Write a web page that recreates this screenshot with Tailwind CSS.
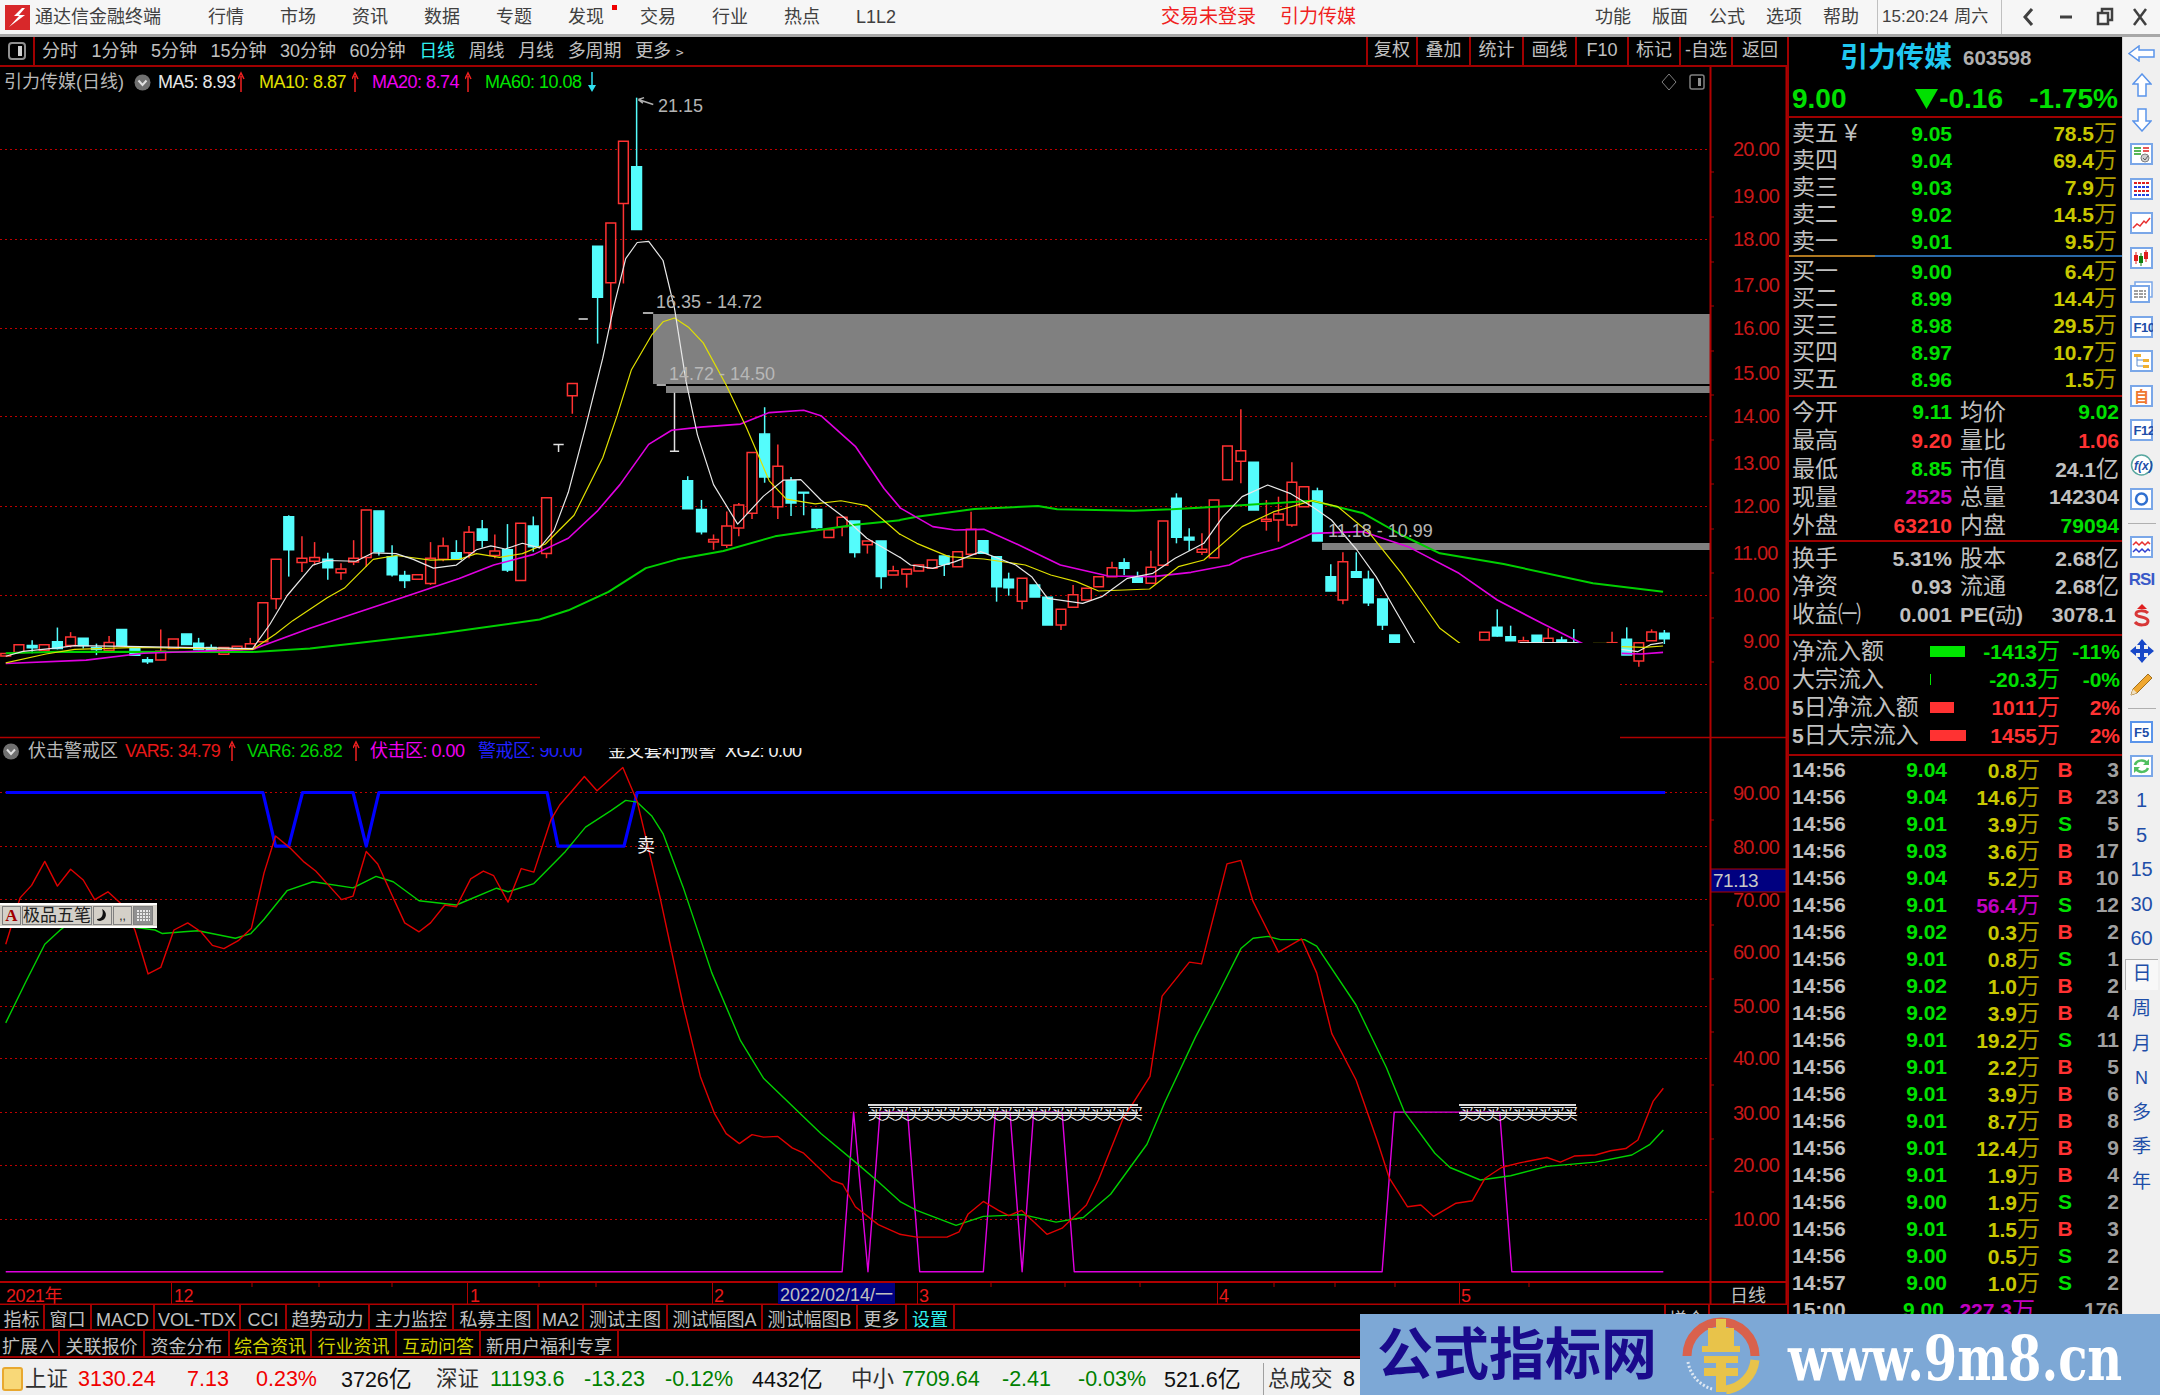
<!DOCTYPE html>
<html lang="zh-CN">
<head>
  <meta charset="UTF-8" />
  <title>通达信金融终端</title>
  <script src="https://cdn.jsdelivr.net/npm/@tailwindcss/browser@4"></script>
</head>
<body class="bg-black overflow-hidden">
<div class="relative flex h-[1395px] w-[2160px] flex-col overflow-hidden font-['Liberation_Sans','Noto_Sans_CJK_SC',sans-serif]">

  <!-- Menu bar -->
  <header class="flex h-[37px] shrink-0 items-center border-b-[3px] border-[#a8a8a8] bg-[#f6f6f6] text-[18px] text-[#404040]">
    <svg class="ml-[5px] h-[25px] w-[25px]" viewBox="0 0 25 25"><rect width="25" height="25" fill="#d8282a"/><path d="M17 3 L9 11 L14 11 L4 22 L20 10 L14 10 L20 3 Z" fill="#fff"/></svg>
    <span class="ml-[5px] w-[126px] whitespace-nowrap">通达信金融终端</span>
    <nav class="ml-[47px] flex gap-[36px]">
      <span class="w-[36px] whitespace-nowrap">行情</span>
      <span class="w-[36px] whitespace-nowrap">市场</span>
      <span class="w-[36px] whitespace-nowrap">资讯</span>
      <span class="w-[36px] whitespace-nowrap">数据</span>
      <span class="w-[36px] whitespace-nowrap">专题</span>
      <span class="relative w-[36px] whitespace-nowrap">发现<i class="absolute left-[44px] top-[1px] h-[5px] w-[5px] bg-[#f00000]"></i></span>
      <span class="w-[36px] whitespace-nowrap">交易</span>
      <span class="w-[36px] whitespace-nowrap">行业</span>
      <span class="w-[36px] whitespace-nowrap">热点</span>
      <span class="w-[36px] whitespace-nowrap">L1L2</span>
    </nav>
    <span class="ml-[269px] w-[97px] whitespace-nowrap text-[19px] text-[#f02020]">交易未登录</span>
    <span class="ml-[22px] w-[76px] whitespace-nowrap text-[19px] text-[#f02020]">引力传媒</span>
    <div class="ml-[239px] flex gap-[21px]">
      <span class="w-[36px] whitespace-nowrap">功能</span>
      <span class="w-[36px] whitespace-nowrap">版面</span>
      <span class="w-[36px] whitespace-nowrap">公式</span>
      <span class="w-[36px] whitespace-nowrap">选项</span>
      <span class="w-[36px] whitespace-nowrap">帮助</span>
    </div>
    <div class="ml-[18px] flex h-full w-[125px] items-center gap-[6px] border-x border-[#c0c0c0] pl-[4px] text-[17px] whitespace-nowrap">
      <span>15:20:24</span><span>周六</span>
    </div>
    <svg class="h-[34px] w-[157px] shrink-0" viewBox="2003 0 157 34" fill="none" stroke="#404040">
      <path d="M2033 9 L2026 17 L2033 25" stroke-width="3"/>
      <path d="M2061 17 H2073" stroke-width="3"/>
      <path d="M2099 13 h10 v11 h-10 z M2103 13 v-4 h10 v11 h-4" stroke-width="2.5"/>
      <path d="M2135 9 L2147 25 M2147 9 L2135 25" stroke-width="2.5"/>
    </svg>
  </header>

  <div class="flex min-h-0 flex-1">
    <!-- Chart side -->
    <section class="flex w-[1787px] shrink-0 flex-col">
      <!-- Period tool row -->
      <div class="flex h-[30px] shrink-0 items-center border-b-2 border-[#a00000] text-[18px] text-[#c0c0c0]">
        <div class="flex h-full w-[35px] items-center justify-center border-r-2 border-[#a00000]">
          <svg class="h-[18px] w-[18px]" viewBox="0 0 18 18"><rect x="1" y="1" width="16" height="16" rx="3" fill="none" stroke="#909090" stroke-width="2"/><rect x="10" y="4" width="4" height="10" fill="#d0d0d0"/></svg>
        </div>
        <div class="ml-[7px] flex gap-[13.5px] whitespace-nowrap">
          <span>分时</span><span>1分钟</span><span>5分钟</span><span>15分钟</span><span>30分钟</span><span>60分钟</span>
          <span class="text-[#30f0f0]">日线</span><span>周线</span><span>月线</span><span>多周期</span><span>更多﹥</span>
        </div>
        <div class="ml-auto flex h-full whitespace-nowrap text-center">
          <span class="w-[50px] border-l-2 border-[#a00000]">复权</span>
          <span class="w-[53px] border-l-2 border-[#a00000]">叠加</span>
          <span class="w-[53px] border-l-2 border-[#a00000]">统计</span>
          <span class="w-[53px] border-l-2 border-[#a00000]">画线</span>
          <span class="w-[52px] border-l-2 border-[#a00000]">F10</span>
          <span class="w-[52px] border-l-2 border-[#a00000]">标记</span>
          <span class="w-[52px] border-l-2 border-[#a00000]">-自选</span>
          <span class="w-[56px] border-l-2 border-[#a00000]">返回</span>
        </div>
      </div>

      <!-- Chart canvas, svg coordinates are page pixels -->
      <div class="relative h-[1238px] w-[1787px] shrink-0">
        <svg class="absolute inset-0 [&_*]:[vector-effect:non-scaling-stroke]" width="1787" height="1238" viewBox="0 67 1787 1238" fill="none">
          <!-- main grid -->
          <path d="M0 149.5H1710 M0 239.5H1710 M0 328.5H1710 M0 416.5H1710 M0 506.5H1710 M0 595.5H1710 M0 684.5H1710" stroke="#c00000" stroke-dasharray="2 3"/>
          <!-- gap zones -->
          <rect x="653" y="314" width="1057" height="70" fill="#808080"/>
          <rect x="666" y="386" width="1044" height="7" fill="#808080"/>
          <rect x="1322" y="543" width="388" height="7" fill="#808080"/>
          <g id="candles7" transform="translate(0 90) scale(.57405 .38314)"></g>
          <g id="candles8" transform="translate(700 290) scale(.6378 .33333)"></g>
          <!-- price marks -->
          <g transform="translate(0 90) scale(.57405 .38314)" stroke="#e0e0e0" stroke-width="1.5">
            <path d="M964 925H982 M973 925V945 M1008 598H1024 M1120 582H1138 M1144 770H1160 M1175 790V943 M1167 943H1183"/>
            <path d="M1112 25L1138 38 M1112 25L1122 20 M1112 25L1120 34" stroke="#b0b0b0"/>
          </g>
          <!-- MA lines, left half -->
          <g transform="translate(0 90) scale(.57405 .38314)" stroke-width="1.2" stroke-linejoin="round">
            <polyline stroke="#00d000" stroke-width="2" points="10,1470 100,1466 440,1467 540,1458 760,1420 940,1382 990,1358 1060,1310 1125,1248 1180,1225 1260,1203 1350,1165 1490,1135 1568,1123"/>
            <polyline stroke="#e000e0" stroke-width="1.6" points="10,1497 150,1488 250,1470 440,1460 540,1405 620,1365 700,1325 800,1275 860,1240 930,1212 990,1170 1040,1100 1080,1030 1130,925 1170,888 1220,880 1290,872 1340,842 1400,836 1430,850 1490,930 1540,1040 1568,1090"/>
            <polyline stroke="#e0e000" points="10,1495 80,1472 130,1460 240,1455 440,1460 480,1420 510,1385 570,1325 600,1300 650,1225 690,1215 750,1227 800,1225 830,1210 870,1220 910,1210 950,1185 1000,1110 1050,960 1075,850 1100,730 1135,640 1155,605 1175,595 1200,620 1225,660 1265,770 1300,880 1340,1020 1370,1068 1420,1080 1465,1072 1510,1085 1568,1160"/>
            <polyline stroke="#e8e8e8" points="10,1478 40,1465 100,1456 130,1450 220,1452 440,1458 470,1395 500,1320 545,1240 570,1228 620,1230 650,1208 690,1210 720,1225 755,1248 795,1240 830,1200 855,1190 880,1198 910,1183 940,1195 965,1150 990,1050 1020,880 1050,700 1070,560 1090,440 1110,398 1130,395 1155,445 1175,570 1195,760 1215,900 1243,1030 1285,1133 1330,1060 1365,1018 1395,1017 1430,1070 1470,1115 1510,1170 1568,1220"/>
          </g>
          <!-- MA lines, right half -->
          <g transform="translate(700 290) scale(.6378 .33333)" stroke-width="1.2" stroke-linejoin="round">
            <polyline stroke="#00d000" stroke-width="2" points="313,690 340,680 430,657 530,648 560,658 680,662 740,658 830,648 960,632 1040,670 1100,735 1160,790 1260,822 1400,880 1510,905"/>
            <polyline stroke="#e000e0" stroke-width="1.6" points="313,653 365,710 400,720 445,718 500,765 565,825 640,858 710,860 770,847 830,825 850,805 910,773 960,730 1040,725 1110,770 1190,850 1250,930 1320,1000 1385,1062"/>
            <polyline stroke="#e0e000" points="313,732 340,760 390,800 445,807 510,825 550,855 590,875 625,903 705,897 750,830 790,810 850,710 900,665 960,632 1000,650 1050,730 1100,850 1140,960 1160,1015 1195,1065"/>
            <polyline stroke="#e8e8e8" points="313,801 330,825 365,835 400,815 440,785 495,825 520,860 545,925 600,940 630,920 670,865 710,850 745,805 790,760 820,680 850,620 890,585 925,610 960,650 990,690 1030,780 1060,860 1090,960 1122,1065"/>
            <path d="M1285 1058H1375" stroke="#e8e8e8"/>
            <path d="M1400 1060H1428" stroke="#808000"/>
            <polyline stroke="#e000e0" stroke-width="1.6" points="1445,1090 1475,1092 1510,1087"/>
            <polyline stroke="#e8e8e8" points="1445,1078 1470,1085 1490,1064 1510,1058"/>
            <polyline stroke="#e0e000" points="1445,1070 1480,1072 1510,1068"/>
          </g>
          <!-- black patch left by a closed window -->
          <rect x="540" y="643" width="1080" height="105" fill="#000"/>
          <!-- price labels on the chart -->
          <g font-size="18" fill="#b4b4b4">
            <text x="658" y="112">21.15</text>
            <text x="656" y="308">16.35 - 14.72</text>
            <text x="669" y="380" fill="#b8b8b8">14.72 - 14.50</text>
            <text x="1328" y="537">11.18 - 10.99</text>
          </g>

          <!-- lower indicator -->
          <path d="M0 737.5H540 M1620 737.5H1787" stroke="#b00000" stroke-width="1.5"/>
          <path d="M0 792.5H1710 M0 846.5H1710 M0 899.5H1710 M0 951.5H1710 M0 1006.5H1710 M0 1058.5H1710 M0 1112.5H1710 M0 1165.5H1710 M0 1219.5H1710" stroke="#c00000" stroke-dasharray="2 3"/>
          <g transform="translate(0 730) scale(.57405 .35714)" stroke-linejoin="round">
            <polyline stroke="#0000ff" stroke-width="3.2" points="10,175 458,175 480,325 503,325 527,175 615,175 638,325 660,175 953,175 972,325 1087,325 1110,175 1568,175"/>
            <polyline stroke="#e000e0" stroke-width="1.4" points="10,1517 1467,1517 1487,1070 1512,1517 1533,1070"/>
            <polyline stroke="#00d000" stroke-width="1.4" points="10,820 45,705 78,600 105,560 130,530 270,560 283,570 320,565 345,562 410,583 437,570 460,530 500,450 545,425 615,442 655,410 685,425 730,478 795,490 865,443 885,453 930,430 985,340 1020,272 1065,225 1090,197 1110,202 1135,240 1155,290 1190,440 1240,680 1290,870 1330,975 1430,1130 1490,1210 1530,1265 1568,1320"/>
            <polyline stroke="#e00000" stroke-width="1.4" points="10,600 35,470 55,435 78,368 100,437 123,390 145,420 165,475 188,453 210,485 235,560 258,683 280,665 303,560 327,540 350,565 370,603 390,612 415,590 438,555 460,400 480,297 505,330 530,370 550,395 595,475 615,465 638,340 658,375 705,540 730,565 750,540 775,490 795,495 820,417 842,395 860,408 885,482 908,388 930,398 960,250 975,210 1018,130 1040,170 1085,105 1110,200 1150,470 1190,770 1220,970 1245,1075 1265,1130 1288,1158 1310,1133 1330,1140 1355,1138 1380,1170 1400,1185 1450,1262 1468,1272 1490,1335 1530,1385 1568,1412"/>
          </g>
          <g transform="translate(850 730) scale(.60606 .35714)" stroke-linejoin="round">
            <path d="M82 175H1345" stroke="#0000ff" stroke-width="3.2"/>
            <polyline stroke="#e000e0" stroke-width="1.4" points="48,1070 95,1070 115,1517 220,1517 240,1070 264,1070 284,1517 303,1070 350,1070 370,1517 878,1517 898,1070 1072,1070 1092,1517 1342,1517"/>
            <polyline stroke="#00d000" stroke-width="1.4" points="82,1320 110,1345 175,1387 220,1362 285,1357 340,1378 385,1365 430,1300 490,1160 520,1040 570,860 610,730 645,612 665,583 690,578 710,587 750,587 770,605 835,770 885,945 915,1070 965,1185 990,1225 1040,1260 1090,1248 1150,1222 1230,1210 1290,1190 1320,1160 1342,1120"/>
            <polyline stroke="#e00000" stroke-width="1.4" points="82,1412 110,1420 160,1420 180,1405 195,1355 220,1320 245,1345 262,1360 283,1345 325,1412 350,1395 390,1330 410,1260 450,1090 495,970 515,745 560,650 580,655 622,375 645,365 665,480 707,622 745,585 770,680 795,850 835,980 870,1150 890,1255 920,1335 942,1330 963,1362 1000,1325 1027,1318 1048,1255 1075,1225 1105,1212 1150,1197 1172,1210 1195,1193 1230,1190 1255,1178 1280,1172 1300,1148 1325,1040 1342,1003"/>
          </g>
          <!-- buy signal rows -->
          <path d="M868 1105H1138 M868 1113H1138 M1459 1105H1576 M1459 1113H1576" stroke="#d8d8d8" stroke-width="2"/>
          <g id="buyMarks" fill="#e8e8e8" font-size="15"></g>
          <text x="637" y="852" fill="#f0f0f0" font-size="18">卖</text>

          <!-- axis -->
          <path d="M1710.5 67V1305 M1786.5 67V1305" stroke="#b00000" stroke-width="2"/>
          <path d="M1710 172h4 M1710 217h4 M1710 262h4 M1710 306h4 M1710 351h4 M1710 395h4 M1710 440h4 M1710 484h4 M1710 529h4 M1710 573h4 M1710 618h4 M1710 662h4 M1710 820h4 M1710 873h4 M1710 925h4 M1710 979h4 M1710 1032h4 M1710 1085h4 M1710 1139h4 M1710 1192h4" stroke="#b00000"/>
          <g fill="#c81818" font-size="20" letter-spacing="-.8">
            <text x="1733" y="156">20.00</text><text x="1733" y="203">19.00</text><text x="1733" y="246">18.00</text><text x="1733" y="292">17.00</text>
            <text x="1733" y="335">16.00</text><text x="1733" y="380">15.00</text><text x="1733" y="423">14.00</text><text x="1733" y="470">13.00</text>
            <text x="1733" y="513">12.00</text><text x="1733" y="560">11.00</text><text x="1733" y="602">10.00</text><text x="1743" y="648">9.00</text><text x="1743" y="690">8.00</text>
            <text x="1733" y="800">90.00</text><text x="1733" y="854">80.00</text><text x="1733" y="907">70.00</text><text x="1733" y="959">60.00</text>
            <text x="1733" y="1013">50.00</text><text x="1733" y="1065">40.00</text><text x="1733" y="1120">30.00</text><text x="1733" y="1172">20.00</text><text x="1733" y="1226">10.00</text>
          </g>
          <rect x="1711" y="869" width="75" height="23" fill="#000080" stroke="#b00000"/>
          <text x="1713" y="887" fill="#c8c8c8" font-size="19" letter-spacing="-.5">71.13</text>

          <!-- date axis -->
          <path d="M0 1282H1787 M0 1304.5H1787" stroke="#b00000" stroke-width="2"/>
          <path d="M171.5 1282V1305 M467.5 1282V1305 M712.5 1282V1305 M917.5 1282V1305 M1217.5 1282V1305 M1459.5 1282V1305 M1710.5 1282V1305" stroke="#b00000"/>
          <path d="M252 1282v5 M319 1282v5 M392 1282v5 M539 1282v5 M596 1282v5 M991 1282v5 M1065 1282v5 M1140 1282v5 M1274 1282v5 M1335 1282v5 M1395 1282v5 M1529 1282v5" stroke="#b00000"/>
          <g fill="#e81818" font-size="18" letter-spacing="-.4">
            <text x="6" y="1302">2021年</text><text x="174" y="1302">12</text><text x="470" y="1302">1</text><text x="714" y="1302">2</text>
            <text x="919" y="1302">3</text><text x="1219" y="1302">4</text><text x="1461" y="1302">5</text>
          </g>
          <rect x="778" y="1283" width="117" height="21" fill="#000080"/>
          <text x="780" y="1301" fill="#c0c0c0" font-size="18">2022/02/14/一</text>
          <text x="1730" y="1302" fill="#c0c0c0" font-size="18">日线</text>
        </svg>

        <!-- main chart caption -->
        <div class="absolute left-[4px] top-[4px] flex h-[22px] items-center whitespace-nowrap text-[18px] tracking-[-0.5px]">
          <span class="w-[128px] text-[#b8b8b8] tracking-normal">引力传媒(日线)</span>
          <svg class="ml-[2px] h-[17px] w-[17px]" viewBox="0 0 17 17"><circle cx="8.5" cy="8.5" r="8" fill="#707070"/><path d="M4.5 6.5L8.5 11L12.5 6.5" stroke="#e0e0e0" stroke-width="2" fill="none"/></svg>
          <span class="ml-[7px] w-[80px] text-[#e8e8e8]">MA5: 8.93</span>
          <svg class="h-[22px] w-[21px]" viewBox="0 0 21 22"><path d="M3 21V5 M0 8L3 2L6 8" stroke="#f02020" stroke-width="1.5" fill="none"/></svg>
          <span class="w-[93px] text-[#e0e000]">MA10: 8.87</span>
          <svg class="h-[22px] w-[20px]" viewBox="0 0 20 22"><path d="M3 21V5 M0 8L3 2L6 8" stroke="#f02020" stroke-width="1.5" fill="none"/></svg>
          <span class="w-[93px] text-[#f000f0]">MA20: 8.74</span>
          <svg class="h-[22px] w-[20px]" viewBox="0 0 20 22"><path d="M3 21V5 M0 8L3 2L6 8" stroke="#f02020" stroke-width="1.5" fill="none"/></svg>
          <span class="w-[102px] text-[#00e600]">MA60: 10.08</span>
          <svg class="h-[22px] w-[12px]" viewBox="0 0 12 22"><path d="M5 1V16" stroke="#30e0f0" stroke-width="1.5"/><path d="M1 14H9L5 21Z" fill="#30e0f0"/></svg>
        </div>
        <svg class="absolute left-[1660px] top-[6px] h-[18px] w-[48px]" viewBox="0 0 48 18"><path d="M9 1L16 9L9 17L2 9Z" fill="none" stroke="#808080"/><rect x="30" y="2" width="14" height="14" rx="2" fill="none" stroke="#808080" stroke-width="1.5"/><rect x="38" y="5" width="3" height="8" fill="#909090"/></svg>

        <!-- lower chart caption -->
        <div class="absolute left-[2px] top-[673px] flex h-[22px] items-center whitespace-nowrap text-[18px] tracking-[-0.5px]">
          <svg class="h-[17px] w-[18px]" viewBox="0 0 17 17"><circle cx="8.5" cy="8.5" r="8" fill="#707070"/><path d="M4.5 6.5L8.5 11L12.5 6.5" stroke="#e0e0e0" stroke-width="2" fill="none"/></svg>
          <span class="ml-[8px] w-[97px] text-[#b8b8b8] tracking-normal">伏击警戒区</span>
          <span class="w-[104px] text-[#e81818]">VAR5: 34.79</span>
          <svg class="h-[22px] w-[18px]" viewBox="0 0 18 22"><path d="M3 21V5 M0 8L3 2L6 8" stroke="#f02020" stroke-width="1.5" fill="none"/></svg>
          <span class="w-[106px] text-[#00d000]">VAR6: 26.82</span>
          <svg class="h-[22px] w-[17px]" viewBox="0 0 17 22"><path d="M3 21V5 M0 8L3 2L6 8" stroke="#f02020" stroke-width="1.5" fill="none"/></svg>
          <span class="w-[108px] text-[#f000f0]">伏击区: 0.00</span>
          <span class="w-[130px] text-[#2020ff]">警戒区: 90.00</span>
          <span class="ml-[-66px] pl-[66px] w-[196px] text-[#f0f0f0] tracking-normal">金叉套利预警</span>
          <span class="ml-[-13px] text-[#f0f0f0]">XG2: 0.00</span>
        </div>
        <!-- the closed window also clips the top of the caption -->
        <div class="absolute left-[540px] top-[660px] h-[21px] w-[1080px] bg-black"></div>

        <!-- IME bar -->
        <div class="absolute left-0 top-[836px] flex h-[25px] w-[157px] items-stretch gap-px border-t-2 border-b-2 border-white bg-[#d4d0c8] px-[2px] py-[1px] text-[17px] text-[#202020]">
          <span class="flex w-[19px] items-center justify-center border border-[#808080] font-['Liberation_Serif',serif] font-bold text-[#a00000]">A</span>
          <span class="flex w-[70px] items-center justify-center whitespace-nowrap border border-[#808080]">极品五笔</span>
          <span class="flex w-[19px] items-center justify-center border border-[#808080]">
            <svg class="h-[13px] w-[11px]" viewBox="0 0 11 13"><path d="M5 0C11 3 10 11 3 12C1 12 0 11 0 10C5 10 7 5 5 0Z" fill="#101010"/></svg>
          </span>
          <span class="flex w-[19px] items-center justify-center border border-[#808080] text-[12px] leading-none">,,</span>
          <span class="flex w-[20px] items-center justify-center border border-[#808080] bg-[#909090]">
            <svg class="h-[13px] w-[15px]" viewBox="0 0 15 13"><path d="M1 2H14 M1 5H14 M1 8H14 M1 11H14" stroke="#e8e8e8" stroke-dasharray="2 1" stroke-width="2"/></svg>
          </span>
        </div>
      </div>

      <!-- Indicator tabs -->
      <div class="flex h-[26px] shrink-0 border-b-2 border-[#a00000] text-center text-[18px] leading-[30px] whitespace-nowrap text-[#c0c0c0] [&>span]:h-full">
        <span class="w-[45px] border-r-2 border-[#a00000]">指标</span>
        <span class="w-[47px] border-r-2 border-[#a00000]">窗口</span>
        <span class="w-[63px] border-r-2 border-[#a00000]">MACD</span>
        <span class="w-[86px] border-r-2 border-[#a00000]">VOL-TDX</span>
        <span class="w-[46px] border-r-2 border-[#a00000]">CCI</span>
        <span class="w-[83px] border-r-2 border-[#a00000]">趋势动力</span>
        <span class="w-[84px] border-r-2 border-[#a00000]">主力监控</span>
        <span class="w-[85px] border-r-2 border-[#a00000]">私募主图</span>
        <span class="w-[45px] border-r-2 border-[#a00000]">MA2</span>
        <span class="w-[84px] border-r-2 border-[#a00000]">测试主图</span>
        <span class="w-[95px] border-r-2 border-[#a00000]">测试幅图A</span>
        <span class="w-[95px] border-r-2 border-[#a00000]">测试幅图B</span>
        <span class="w-[49px] border-r-2 border-[#a00000]">更多</span>
        <span class="w-[48px] border-r-2 border-[#a00000] text-[#30f0f0]">设置</span>
        <span class="ml-[709px] w-[46px] border-x-2 border-[#a00000]">增仓</span>
      </div>
      <div class="flex h-[27px] shrink-0 border-b-2 border-[#a00000] text-center text-[18px] leading-[33px] whitespace-nowrap text-[#c0c0c0] [&>span]:h-full">
        <span class="w-[60px] border-r-2 border-[#a00000]">扩展∧</span>
        <span class="w-[85px] border-r-2 border-[#a00000]">关联报价</span>
        <span class="w-[85px] border-r-2 border-[#a00000]">资金分布</span>
        <span class="w-[82px] border-r-2 border-[#a00000] text-[#d0d000]">综合资讯</span>
        <span class="w-[85px] border-r-2 border-[#a00000] text-[#d0d000]">行业资讯</span>
        <span class="w-[84px] border-r-2 border-[#a00000] text-[#d0d000]">互动问答</span>
        <span class="w-[138px] border-r-2 border-[#a00000]">新用户福利专享</span>
      </div>
    </section>

    <!-- Quote panel -->
    <aside class="flex h-full w-[335px] shrink-0 flex-col overflow-hidden border-l-2 border-[#a00000] text-[#c0c0c0]">
      <div class="h-[81px] shrink-0 border-b-2 border-[#a00000]">
        <div class="flex h-[42px] items-center pl-[51px] whitespace-nowrap">
          <span class="w-[115px] text-[28px] font-bold text-[#20c8f0]">引力传媒</span>
          <span class="ml-[8px] text-[20.5px] font-bold text-[#b0b0b0]">603598</span>
        </div>
        <div class="mt-[3px] flex h-[34px] items-center text-[28px] font-bold whitespace-nowrap text-[#00e000]">
          <span class="ml-[3px] w-[123px]">9.00</span>
          <svg class="h-[20px] w-[23px]" viewBox="0 0 23 20"><path d="M0 0H23L11.5 20Z" fill="#00e000"/></svg>
          <span class="w-[65px] text-right">-0.16</span>
          <span class="w-[115px] text-right">-1.75%</span>
        </div>
      </div>

      <div id="bookSell" class="shrink-0 pt-[2px]"></div>
      <div class="flex h-[2px] shrink-0"><i class="w-[86px] bg-[#b07820]"></i><i class="flex-1 bg-[#2868a8]"></i></div>
      <div id="bookBuy" class="shrink-0 pt-px"></div>
      <div class="mt-[2px] h-[2px] shrink-0 bg-[#a00000]"></div>

      <div class="shrink-0 py-[1px] text-[23px]">
        <div class="flex h-[28.3px] items-center"><span class="w-[100px] pl-[3px]">今开</span><b class="w-[63px] text-right text-[21px] text-[#00e000]">9.11</b><span class="ml-[8px] w-[60px]">均价</span><b class="flex-1 pr-[3px] text-right text-[21px] text-[#00e000]">9.02</b></div>
        <div class="flex h-[28.3px] items-center"><span class="w-[100px] pl-[3px]">最高</span><b class="w-[63px] text-right text-[21px] text-[#ff3232]">9.20</b><span class="ml-[8px] w-[60px]">量比</span><b class="flex-1 pr-[3px] text-right text-[21px] text-[#ff3232]">1.06</b></div>
        <div class="flex h-[28.3px] items-center"><span class="w-[100px] pl-[3px]">最低</span><b class="w-[63px] text-right text-[21px] text-[#00e000]">8.85</b><span class="ml-[8px] w-[60px]">市值</span><b class="flex-1 pr-[3px] text-right text-[21px] text-[#c0c0c0]">24.1<span class="font-normal text-[23px]">亿</span></b></div>
        <div class="flex h-[28.3px] items-center"><span class="w-[100px] pl-[3px]">现量</span><b class="w-[63px] text-right text-[21px] text-[#c000c0]">2525</b><span class="ml-[8px] w-[60px]">总量</span><b class="flex-1 pr-[3px] text-right text-[21px] text-[#c0c0c0]">142304</b></div>
        <div class="flex h-[28.3px] items-center"><span class="w-[100px] pl-[3px]">外盘</span><b class="w-[63px] text-right text-[21px] text-[#ff3232]">63210</b><span class="ml-[8px] w-[60px]">内盘</span><b class="flex-1 pr-[3px] text-right text-[21px] text-[#00e000]">79094</b></div>
      </div>
      <div class="h-[2px] shrink-0 bg-[#a00000]"></div>

      <div class="h-[92px] shrink-0 pt-[2px] text-[23px]">
        <div class="flex h-[28px] items-center"><span class="w-[100px] pl-[3px]">换手</span><b class="w-[63px] text-right text-[21px]">5.31%</b><span class="ml-[8px] w-[60px]">股本</span><b class="flex-1 pr-[3px] text-right text-[21px]">2.68<span class="font-normal text-[23px]">亿</span></b></div>
        <div class="flex h-[28px] items-center"><span class="w-[100px] pl-[3px]">净资</span><b class="w-[63px] text-right text-[21px]">0.93</b><span class="ml-[8px] w-[60px]">流通</span><b class="flex-1 pr-[3px] text-right text-[21px]">2.68<span class="font-normal text-[23px]">亿</span></b></div>
        <div class="flex h-[28px] items-center whitespace-nowrap"><span class="w-[100px] pl-[3px]">收益㈠</span><b class="w-[63px] text-right text-[21px]">0.001</b><b class="ml-[8px] w-[68px] text-[21px] font-bold">PE(<span class="font-normal">动</span>)</b><b class="flex-1 pr-[6px] text-right text-[21px]">3078.1</b></div>
      </div>
      <div class="h-[2px] shrink-0 bg-[#a00000]"></div>

      <div class="h-[118px] shrink-0 pt-px text-[23px] whitespace-nowrap">
        <div class="flex h-[28px] items-center"><span class="w-[141px] pl-[3px]">净流入额</span><i class="h-[11px] w-[35px] bg-[#00e600]"></i><b class="ml-auto text-[21px] text-[#00e000]">-1413<span class="font-normal text-[23px]">万</span></b><b class="w-[62px] pr-[2px] text-right text-[21px] text-[#00e000]">-11%</b></div>
        <div class="flex h-[28px] items-center"><span class="w-[141px] pl-[3px]">大宗流入</span><i class="h-[11px] w-px bg-[#00e600]"></i><b class="ml-auto text-[21px] text-[#00e000]">-20.3<span class="font-normal text-[23px]">万</span></b><b class="w-[62px] pr-[2px] text-right text-[21px] text-[#00e000]">-0%</b></div>
        <div class="flex h-[28px] items-center"><span class="w-[141px] pl-[3px]"><b class="text-[21px]">5</b>日净流入额</span><i class="h-[11px] w-[24px] bg-[#ff3232]"></i><b class="ml-auto text-[21px] text-[#ff3232]">1011<span class="font-normal text-[23px]">万</span></b><b class="w-[62px] pr-[2px] text-right text-[21px] text-[#ff3232]">2%</b></div>
        <div class="flex h-[28px] items-center"><span class="w-[141px] pl-[3px]"><b class="text-[21px]">5</b>日大宗流入</span><i class="h-[11px] w-[36px] bg-[#ff3232]"></i><b class="ml-auto text-[21px] text-[#ff3232]">1455<span class="font-normal text-[23px]">万</span></b><b class="w-[62px] pr-[2px] text-right text-[21px] text-[#ff3232]">2%</b></div>
      </div>
      <div class="h-[2px] shrink-0 bg-[#a00000]"></div>

      <div id="ticks" class="shrink-0"></div>
    </aside>

    <!-- Right tool strip -->
    <aside class="flex w-[38px] shrink-0 flex-col items-center border-l border-[#d8d8d8] bg-[#f0f0f0] text-[#1e4ea8]">
      <svg class="mt-[8px] h-[17px] w-[27px]" viewBox="0 0 27 17"><path d="M1 8.5L11 1V5H26V12H11V16Z" fill="#fff" stroke="#5a94ea" stroke-width="1.5"/></svg>
      <svg class="mt-[11px] h-[24px] w-[20px]" viewBox="0 0 20 24"><path d="M10 1L19 11H14V23H6V11H1Z" fill="#fff" stroke="#5a94ea" stroke-width="1.5"/></svg>
      <svg class="mt-[11px] h-[24px] w-[20px]" viewBox="0 0 20 24"><path d="M10 23L19 13H14V1H6V13H1Z" fill="#fff" stroke="#5a94ea" stroke-width="1.5"/></svg>
      <div class="mt-[11px] flex flex-col gap-[12.5px]">
        <svg class="h-[22px] w-[23px]" viewBox="0 0 23 22"><rect x="1" y="1" width="21" height="20" fill="#fff" stroke="#7aa7e8" stroke-width="2"/><path d="M4 5H11 M4 8H11 M4 11H11" stroke="#20a020" stroke-width="1.5"/><path d="M13 5H19 M13 8H19" stroke="#e02020" stroke-width="1.5"/><circle cx="15" cy="15" r="4" fill="#d0d0d0" stroke="#808080"/><path d="M13 15L15 17L18 13" stroke="#606060" fill="none"/></svg>
        <svg class="h-[22px] w-[23px]" viewBox="0 0 23 22"><rect x="1" y="1" width="21" height="20" fill="#fff" stroke="#7aa7e8" stroke-width="2"/><path d="M4 5H19" stroke="#e02020" stroke-width="2" stroke-dasharray="3 1"/><path d="M4 9H19" stroke="#2040e0" stroke-width="2" stroke-dasharray="3 1"/><path d="M4 13H19" stroke="#e02020" stroke-width="2" stroke-dasharray="3 1"/><path d="M4 17H19" stroke="#2040e0" stroke-width="2" stroke-dasharray="3 1"/></svg>
        <svg class="h-[22px] w-[23px]" viewBox="0 0 23 22"><rect x="1" y="1" width="21" height="20" fill="#fff" stroke="#7aa7e8" stroke-width="2"/><path d="M3 16L7 12L10 14L14 9L16 11L20 6" stroke="#e83030" stroke-width="1.5" fill="none"/></svg>
        <svg class="h-[22px] w-[23px]" viewBox="0 0 23 22"><rect x="1" y="1" width="21" height="20" fill="#fff" stroke="#7aa7e8" stroke-width="2"/><path d="M6 5V17 M16 3V15" stroke="#e02020"/><path d="M11 6V19" stroke="#108010"/><rect x="4" y="8" width="4" height="6" fill="#e02020"/><rect x="9" y="9" width="4" height="7" fill="#108010"/><rect x="14" y="5" width="4" height="7" fill="#e02020"/></svg>
        <svg class="h-[22px] w-[23px]" viewBox="0 0 23 22"><rect x="5" y="1" width="17" height="15" fill="#fff" stroke="#7aa7e8" stroke-width="1.5"/><rect x="1" y="5" width="18" height="16" fill="#fff" stroke="#7aa7e8" stroke-width="2"/><path d="M4 10H16 M4 13H16 M4 16H16" stroke="#808080" stroke-width="1.5" stroke-dasharray="4 1"/></svg>
        <svg class="h-[22px] w-[23px]" viewBox="0 0 23 22"><rect x="1" y="1" width="21" height="20" fill="#fff" stroke="#7aa7e8" stroke-width="2"/><text x="3.5" y="16" fill="#1e4ea8" font-size="13" font-weight="bold" letter-spacing="-.5">F10</text></svg>
        <svg class="h-[22px] w-[23px]" viewBox="0 0 23 22"><rect x="1" y="1" width="21" height="20" fill="#fff" stroke="#7aa7e8" stroke-width="2"/><rect x="4" y="4" width="7" height="3" fill="#f0b030"/><rect x="13" y="9" width="6" height="3" fill="#f0b030"/><rect x="13" y="15" width="6" height="3" fill="#f0b030"/><path d="M7 7V16H13 M7 10H13" stroke="#6090d0" fill="none"/></svg>
        <svg class="h-[22px] w-[23px]" viewBox="0 0 23 22"><rect x="1" y="1" width="21" height="20" fill="#fff" stroke="#7aa7e8" stroke-width="2"/><text x="11.5" y="17" text-anchor="middle" fill="#f07830" font-size="15" font-weight="bold">自</text></svg>
        <svg class="h-[22px] w-[23px]" viewBox="0 0 23 22"><rect x="1" y="1" width="21" height="20" fill="#fff" stroke="#7aa7e8" stroke-width="2"/><text x="3.5" y="16" fill="#1e4ea8" font-size="13" font-weight="bold" letter-spacing="-.5">F12</text></svg>
        <svg class="h-[22px] w-[23px]" viewBox="0 0 23 22"><circle cx="11.5" cy="11" r="10" fill="#fff" stroke="#58a8a0" stroke-width="1.5"/><text x="4" y="16" fill="#1e4ea8" font-size="12" font-style="italic" font-weight="bold">f(x)</text></svg>
        <svg class="h-[22px] w-[23px]" viewBox="0 0 23 22"><rect x="1" y="1" width="21" height="20" fill="#fff" stroke="#7aa7e8" stroke-width="2"/><circle cx="11.5" cy="11" r="5.5" fill="none" stroke="#3070d0" stroke-width="2.5"/></svg>
      </div>
      <i class="mt-[13px] h-px w-[28px] bg-[#b0b0b0]"></i>
      <svg class="mt-[12px] h-[22px] w-[23px]" viewBox="0 0 23 22"><rect x="1" y="1" width="21" height="20" fill="#fff" stroke="#7aa7e8" stroke-width="2"/><path d="M3 9L6 6L9 9L12 6L15 9L18 6L20 8" stroke="#e83030" stroke-width="1.5" fill="none"/><path d="M3 16L6 13L9 16L12 13L15 16L18 13L20 15" stroke="#3040d0" stroke-width="1.5" fill="none"/></svg>
      <span class="mt-[14px] flex h-[16px] items-center text-[17px] font-bold tracking-[-1px] text-[#3a5ac8]">RSI</span>
      <svg class="mt-[16px] h-[24px] w-[18px]" viewBox="0 0 18 24"><path d="M9 0L14 5H4Z" fill="#e02020"/><path d="M15 9C12 6 3 6 3 10C3 14 15 12 15 17C15 22 5 22 2 18" stroke="#d83838" stroke-width="3" fill="none"/></svg>
      <svg class="mt-[11px] h-[24px] w-[24px]" viewBox="0 0 24 24"><path d="M12 0L17 6H14V10H18V7L24 12L18 17V14H14V18H17L12 24L7 18H10V14H6V17L0 12L6 7V10H10V6H7Z" fill="#1848c8"/></svg>
      <svg class="mt-[10px] h-[23px] w-[23px]" viewBox="0 0 23 23"><path d="M18 1L22 5L7 20L1 22L3 16Z" fill="#f0a830" stroke="#a07020"/><path d="M1 22L3 16L7 20Z" fill="#f0e0c0"/></svg>
      <i class="mt-[12px] h-px w-[28px] bg-[#b0b0b0]"></i>
      <svg class="mt-[12px] h-[22px] w-[23px]" viewBox="0 0 23 22"><rect x="1" y="1" width="21" height="20" fill="#fff" stroke="#5a94ea" stroke-width="2"/><text x="4" y="16" fill="#1e4ea8" font-size="13" font-weight="bold">F5</text></svg>
      <svg class="mt-[12px] h-[22px] w-[23px]" viewBox="0 0 23 22"><rect x="1" y="1" width="21" height="20" fill="#fff" stroke="#7aa7e8" stroke-width="2"/><path d="M5 10C6 5 14 4 17 8" stroke="#50c060" stroke-width="2.5" fill="none"/><path d="M19 4V10H13Z" fill="#50c060"/><path d="M18 13C16 18 9 18 6 14" stroke="#50c060" stroke-width="2.5" fill="none"/><path d="M4 18V12H10Z" fill="#50c060"/></svg>
      <div class="mt-[6px] flex w-full flex-col items-center text-[20px]">
        <span class="flex h-[34.5px] items-center">1</span>
        <span class="flex h-[34.5px] items-center">5</span>
        <span class="flex h-[34.5px] items-center">15</span>
        <span class="flex h-[34.5px] items-center">30</span>
        <span class="flex h-[34.5px] items-center">60</span>
        <span class="mt-[3px] flex h-[31px] w-[33px] items-center justify-center border-l border-t border-[#b0b0b0] bg-[#f8f8f8] text-[19px]">日</span>
        <span class="mt-[2.5px] flex h-[34.5px] items-center text-[19px]">周</span>
        <span class="flex h-[34.5px] items-center text-[19px]">月</span>
        <span class="flex h-[34.5px] items-center text-[18px]">N</span>
        <span class="flex h-[34.5px] items-center text-[19px]">多</span>
        <span class="flex h-[34.5px] items-center text-[19px]">季</span>
        <span class="flex h-[34.5px] items-center text-[19px]">年</span>
      </div>
    </aside>
  </div>

  <!-- Index status bar -->
  <footer class="flex h-[36px] shrink-0 items-center bg-[#f0f0f0] pt-[4px] text-[21.5px] whitespace-nowrap">
    <i class="ml-[2px] h-[24px] w-[21px] rounded-[3px] border-2 border-[#e8a830] bg-[#f8d878]"></i>
    <span class="ml-[2px] w-[53px] text-[#303030]">上证</span>
    <span class="w-[109px] text-[#f00000]">3130.24</span>
    <span class="w-[69px] text-[#f00000]">7.13</span>
    <span class="w-[85px] text-[#f00000]">0.23%</span>
    <span class="w-[95px] text-[#101010]">3726<span class="text-[23px]">亿</span></span>
    <span class="w-[54px] text-[#303030]">深证</span>
    <span class="w-[94px] text-[#008000]">11193.6</span>
    <span class="w-[81px] text-[#008000]">-13.23</span>
    <span class="w-[87px] text-[#008000]">-0.12%</span>
    <span class="w-[99px] text-[#101010]">4432<span class="text-[23px]">亿</span></span>
    <span class="w-[51px] text-[#303030]">中小</span>
    <span class="w-[100px] text-[#008000]">7709.64</span>
    <span class="w-[76px] text-[#008000]">-2.41</span>
    <span class="w-[86px] text-[#008000]">-0.03%</span>
    <span class="w-[99px] text-[#101010]">521.6<span class="text-[23px]">亿</span></span>
    <span class="w-[80px] border-l border-[#a0a0a0] pl-[4px] text-[#303030]">总成交</span>
    <span class="text-[#101010]">8</span>
  </footer>

  <!-- Site watermark -->
  <div class="absolute left-[1360px] top-[1314px] flex h-[81px] w-[800px] items-center bg-[#7da8d6]">
    <span class="ml-[17px] w-[280px] whitespace-nowrap text-[56px] font-bold leading-none text-[#1a0a8c]">公式指标网</span>
    <svg class="ml-[25px] h-[78px] w-[78px] shrink-0" viewBox="0 0 78 78" fill="none">
      <path d="M5 40A34 34 0 0 1 73 40" stroke="#d9614c" stroke-width="9"/>
      <path d="M73 44A34 34 0 0 1 44 74" stroke="#e8c34a" stroke-width="9"/>
      <path d="M6 46A34 34 0 0 0 30 73" stroke="#dfe8f2" stroke-width="3" stroke-dasharray="2 2"/>
      <path d="M34 3h10v9h8v18h6v6H20v-6h6V12h8z M22 40h34v7H44v5h12v8H44v16H34V60H22v-8h12v-5H22z" fill="#e8c34a"/>
    </svg>
    <span class="ml-[28px] mt-[6px] origin-center scale-y-[1.28] whitespace-nowrap font-['DejaVu_Serif',serif] text-[48px] font-bold leading-none text-white">www.9m8.cn</span>
  </div>
</div>

<script>
  // candles are read off the chart: [x, bodyTop, bodyBottom, high, low, colour]
  const left = [
    [33,1448,1468,0,0,'r'],[56,1450,1456,1436,1470,'c'],[77,1448,1462,0,0,'r'],[100,1440,1458,1403,1460,'c'],[123,1428,1450,1415,1455,'r'],
    [145,1431,1450,0,1458,'c'],[168,1455,1460,1445,1475,'c'],[190,1442,1462,1425,1465,'r'],[212,1408,1450,0,0,'c'],[235,1455,1475,0,0,'c'],
    [257,1487,1492,1480,1498,'c'],[280,1465,1488,1408,0,'r'],[302,1433,1458,0,0,'r'],[325,1420,1447,0,0,'c'],[346,1444,1460,1430,1462,'c'],
    [368,1455,1462,1447,0,'c'],[390,1455,1473,0,0,'r'],[413,1452,1460,0,0,'r'],[436,1445,1458,1430,0,'r'],[458,1338,1440,0,0,'r'],
    [481,1225,1328,0,1355,'r'],[503,1114,1200,1110,1270,'c'],[526,1222,1233,1165,1258,'r'],[548,1220,1230,1180,1240,'r'],[571,1225,1247,1208,1278,'c'],
    [594,1250,1260,1235,1278,'r'],[616,1222,1232,1175,1240,'r'],[638,1096,1220,0,1245,'r'],[660,1099,1205,0,1215,'c'],[683,1218,1265,1188,1270,'c'],
    [705,1267,1280,1255,1300,'c'],[727,1265,1277,0,0,'r'],[750,1222,1288,1180,1292,'r'],[772,1190,1225,1168,1230,'r'],[795,1208,1225,1175,0,'c'],
    [817,1154,1208,1138,1222,'r'],[840,1146,1175,1122,1195,'c'],[862,1203,1215,1160,1222,'r'],[884,1200,1253,1133,1258,'c'],[907,1131,1280,0,0,'r'],
    [929,1138,1192,1113,1205,'c'],[952,1064,1210,0,1222,'r'],[997,766,798,0,845,'r'],[1041,408,541,0,662,'c'],[1064,347,503,0,625,'r'],
    [1086,134,296,0,505,'r'],[1109,200,364,20,0,'c'],[1198,1020,1093,1008,0,'c'],[1222,1095,1153,1070,1160,'c'],[1243,1173,1180,1160,1200,'r'],
    [1266,1138,1188,1100,1195,'r'],[1287,1083,1143,1078,1165,'r'],[1310,946,1105,0,1120,'r'],[1332,898,1010,828,1025,'c'],[1355,982,1088,925,1120,'r'],
    [1378,1020,1078,1010,1112,'c'],[1400,1050,1052,1050,1110,'c'],[1423,1095,1142,0,1145,'c'],[1444,1148,1168,0,0,'r'],[1467,1115,1140,0,1165,'r'],
    [1489,1125,1207,0,1220,'c'],[1511,1177,1187,0,1210,'r'],[1535,1177,1270,0,1302,'c'],[1556,1255,1266,1242,0,'r'],[10,1471,1477,0,0,'r']
  ];
  const right = [
    [324,838,852,0,893,'r'],[343,825,843,0,0,'r'],[364,810,835,0,0,'r'],[383,798,823,0,858,'c'],[404,785,830,0,0,'r'],[425,718,793,665,0,'r'],
    [444,752,790,0,0,'c'],[465,800,890,0,935,'c'],[484,868,893,848,917,'c'],[505,865,934,0,958,'r'],[525,885,921,0,0,'c'],[545,922,1005,0,0,'c'],
    [566,958,1005,0,1020,'r'],[585,914,952,885,0,'r'],[606,895,930,0,0,'r'],[625,860,890,0,0,'r'],[646,833,860,815,0,'r'],[665,818,835,805,855,'c'],
    [686,860,877,845,0,'c'],[707,832,880,782,0,'r'],[726,693,826,0,0,'r'],[747,625,742,610,760,'c'],[767,742,750,715,782,'c'],[787,778,787,730,795,'r'],
    [806,630,803,0,0,'r'],[827,468,569,0,0,'r'],[848,482,514,358,580,'r'],[868,517,660,0,0,'c'],[888,688,694,630,722,'r'],[907,672,690,620,755,'r'],
    [928,577,705,517,710,'r'],[947,590,650,0,0,'r'],[968,603,753,593,0,'c'],[989,860,903,823,0,'c'],[1008,815,930,787,943,'r'],[1029,845,862,787,0,'c'],
    [1048,868,938,842,948,'c'],[1070,927,1005,0,1020,'c'],[1089,1035,1060,0,0,'c'],[1230,1027,1050,0,0,'r'],[1250,1012,1038,958,1040,'c'],[1271,1040,1052,1007,0,'c'],
    [1291,1052,1060,1040,0,'r'],[1312,1036,1060,0,0,'c'],[1330,1045,1060,1015,0,'r'],[1351,1050,1060,1040,0,'c'],[1370,1058,1060,1017,0,'c'],[1430,1058,1060,1025,0,'r'],
    [1453,1048,1095,1012,0,'c'],[1472,1058,1113,0,1130,'r'],[1492,1026,1052,1018,0,'r'],[1512,1030,1046,1020,1062,'c']
  ];
  function drawCandles(id, rows, w) {
    document.getElementById(id).innerHTML = rows.map(([x, top, bot, hi, lo, c]) => {
      const col = c === 'r' ? '#ff3232' : '#54fcfc';
      const wick = `<path d="M${x} ${hi || top}V${lo || bot}" stroke="${col}" stroke-width="1.5"/>`;
      const body = `<rect x="${x - w / 2}" y="${top}" width="${w}" height="${bot - top}" stroke="${col}" stroke-width="1.5" fill="${c === 'r' ? '#000' : col}"/>`;
      return wick + body;
    }).join('');
  }
  drawCandles('candles7', left, 17);
  drawCandles('candles8', right, 15);

  // repeated buy marks on the lower chart
  let marks = '';
  for (let x = 868; x < 1130; x += 13) marks += `<text x="${x}" y="1119">买</text>`;
  for (let x = 1459; x < 1568; x += 13) marks += `<text x="${x}" y="1119">买</text>`;
  document.getElementById('buyMarks').innerHTML = marks;

  // order book
  const bookRow = ([name, price, vol]) => `
    <div class="flex h-[27px] items-center whitespace-nowrap">
      <span class="w-[100px] pl-[3px] text-[23px]">${name}</span>
      <b class="w-[63px] text-right text-[21px] text-[#00e000]">${price}</b>
      <b class="flex-1 pr-[5px] text-right text-[21px] text-[#c8c800]">${vol}<span class="text-[23px] font-normal text-[#b0a000]">万</span></b>
    </div>`;
  document.getElementById('bookSell').innerHTML = [
    ['卖五 ¥','9.05','78.5'],['卖四','9.04','69.4'],['卖三','9.03','7.9'],['卖二','9.02','14.5'],['卖一','9.01','9.5']
  ].map(bookRow).join('');
  document.getElementById('bookBuy').innerHTML = [
    ['买一','9.00','6.4'],['买二','8.99','14.4'],['买三','8.98','29.5'],['买四','8.97','10.7'],['买五','8.96','1.5']
  ].map(bookRow).join('');

  // tick list
  const ticks = [
    ['14:56','9.04','0.8','B','3'],['14:56','9.04','14.6','B','23'],['14:56','9.01','3.9','S','5'],['14:56','9.03','3.6','B','17'],
    ['14:56','9.04','5.2','B','10'],['14:56','9.01','56.4','S','12'],['14:56','9.02','0.3','B','2'],['14:56','9.01','0.8','S','1'],
    ['14:56','9.02','1.0','B','2'],['14:56','9.02','3.9','B','4'],['14:56','9.01','19.2','S','11'],['14:56','9.01','2.2','B','5'],
    ['14:56','9.01','3.9','B','6'],['14:56','9.01','8.7','B','8'],['14:56','9.01','12.4','B','9'],['14:56','9.01','1.9','B','4'],
    ['14:56','9.00','1.9','S','2'],['14:56','9.01','1.5','B','3'],['14:56','9.00','0.5','S','2'],['14:57','9.00','1.0','S','2'],['15:00','9.00','227.3','','176']
  ];
  document.getElementById('ticks').innerHTML = ticks.map(([t, p, v, s, n]) => {
    const big = parseFloat(v) > 50;
    return `
    <div class="flex h-[27px] items-center whitespace-nowrap font-bold text-[21px]">
      <span class="w-[100px] pl-[3px]">${t}</span>
      <span class="w-[58px] text-right text-[#00e000]">${p}</span>
      <span class="w-[93px] text-right ${big ? 'text-[#c000c0]' : 'text-[#c8c800]'}">${v}<span class="text-[23px] font-normal ${big ? 'text-[#c000c0]' : 'text-[#b0a000]'}">万</span></span>
      <span class="w-[50px] text-center ${s === 'B' ? 'text-[#ff3232]' : 'text-[#00e000]'}">${s}</span>
      <span class="flex-1 pr-[3px] text-right text-[#a0a0a0]">${n}</span>
    </div>`;
  }).join('');
</script>
</body>
</html>
